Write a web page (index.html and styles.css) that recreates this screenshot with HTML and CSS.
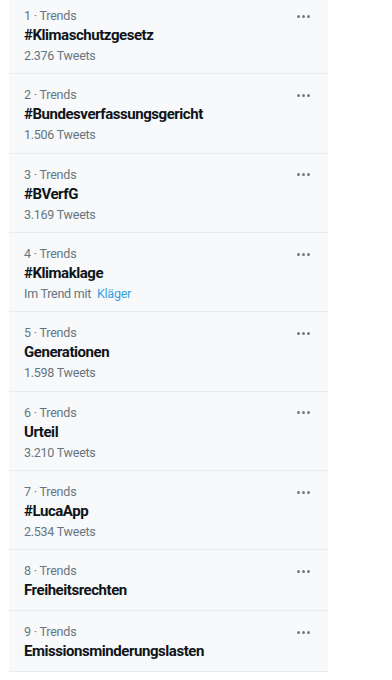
FILE: index.html
```html
<!DOCTYPE html>
<html lang="de">
<head>
  <meta charset="UTF-8" />
  <meta name="viewport" content="width=device-width, initial-scale=1.0"/>
  <title>Trends</title>
  <link rel="stylesheet" href="styles.css">
</head>
<body>

<div class="trends">
  <!-- 1 -->
  <div class="trend">
    <div class="trend-body">
      <p class="trend-meta">1 · Trends</p>
      <p class="trend-title">#Klimaschutzgesetz</p>
      <p class="trend-count">2.376 Tweets</p>
    </div>
    <span class="more"><i></i><i></i><i></i></span>
  </div>

  <div class="trend">
    <div class="trend-body">
      <p class="trend-meta">2 · Trends</p>
      <p class="trend-title">#Bundesverfassungsgericht</p>
      <p class="trend-count">1.506 Tweets</p>
    </div>
    <span class="more"><i></i><i></i><i></i></span>
  </div>

  <div class="trend">
    <div class="trend-body">
      <p class="trend-meta">3 · Trends</p>
      <p class="trend-title">#BVerfG</p>
      <p class="trend-count">3.169 Tweets</p>
    </div>
    <span class="more"><i></i><i></i><i></i></span>
  </div>

  <div class="trend">
    <div class="trend-body">
      <p class="trend-meta">4 · Trends</p>
      <p class="trend-title">#Klimaklage</p>
      <p class="trend-count">Im Trend mit <a href="#" class="trend-link">Kläger</a></p>
    </div>
    <span class="more"><i></i><i></i><i></i></span>
  </div>

  <div class="trend">
    <div class="trend-body">
      <p class="trend-meta">5 · Trends</p>
      <p class="trend-title">Generationen</p>
      <p class="trend-count">1.598 Tweets</p>
    </div>
    <span class="more"><i></i><i></i><i></i></span>
  </div>

  <div class="trend">
    <div class="trend-body">
      <p class="trend-meta">6 · Trends</p>
      <p class="trend-title">Urteil</p>
      <p class="trend-count">3.210 Tweets</p>
    </div>
    <span class="more"><i></i><i></i><i></i></span>
  </div>

  <div class="trend">
    <div class="trend-body">
      <p class="trend-meta">7 · Trends</p>
      <p class="trend-title">#LucaApp</p>
      <p class="trend-count">2.534 Tweets</p>
    </div>
    <span class="more"><i></i><i></i><i></i></span>
  </div>

  <div class="trend">
    <div class="trend-body">
      <p class="trend-meta">8 · Trends</p>
      <p class="trend-title">Freiheitsrechten</p>
    </div>
    <span class="more"><i></i><i></i><i></i></span>
  </div>

  <div class="trend">
    <div class="trend-body">
      <p class="trend-meta">9 · Trends</p>
      <p class="trend-title">Emissionsminderungslasten</p>
    </div>
    <span class="more"><i></i><i></i><i></i></span>
  </div>
</div>

</body>
</html>
```

FILE: styles.css
```css
* {
  margin: 0;
  padding: 0;
  box-sizing: border-box;
}

body {
  background-color: #fff;
  font-family: Roboto, 'Noto Sans', sans-serif;
  color: #0f1419;
}

.trends {
  width: 319px;
  margin-left: 9px;
  margin-top: -5px;
  background-color: #f7f9fa;
}

.trend {
  display: flex;
  justify-content: space-between;
  padding: 13px 16px 8px 15px;
  border-bottom: 1px solid #e6ecf0;
}

.trend-meta {
  font-size: 12.5px;
  line-height: 16px;
  letter-spacing: -0.2px;
  color: #66757f;
}

.trend-title {
  font-size: 15px;
  line-height: 23px;
  font-weight: bold;
  letter-spacing: -0.45px;
  color: #0f1419;
}

.trend-count {
  font-size: 12.5px;
  line-height: 18.35px;
  letter-spacing: -0.25px;
  color: #66757f;
}

.trend-link {
  color: #3a9ee4;
  text-decoration: none;
  margin-left: 3px;
}

.more {
  display: flex;
  gap: 2px;
  height: 18px;
  align-items: center;
  margin-top: -1px;
  margin-right: 2px;
}

.more i {
  display: block;
  width: 3px;
  height: 3px;
  border-radius: 50%;
  background-color: #6e7c87;
}
```
